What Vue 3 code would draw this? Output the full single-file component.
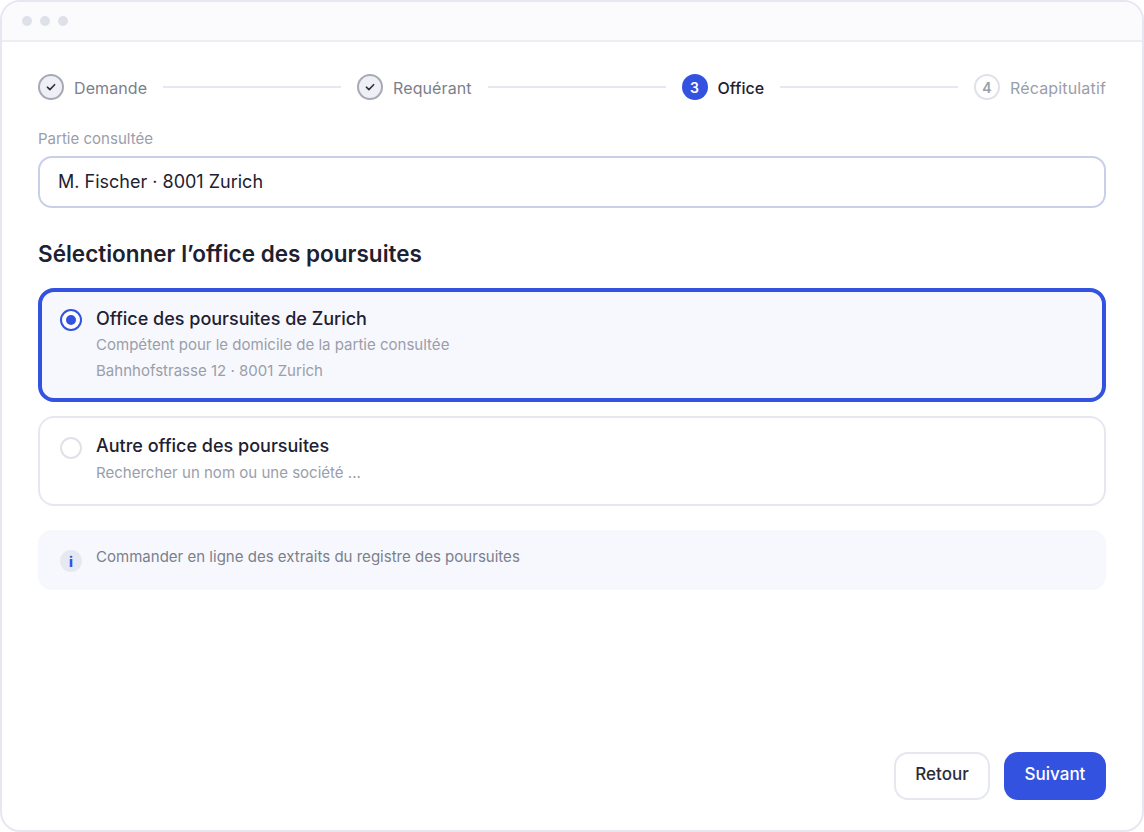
<script setup>
const offices = [
  { id: 'zurich', title: 'Office des poursuites de Zurich', lines: ['Compétent pour le domicile de la partie consultée', 'Bahnhofstrasse 12 · 8001 Zurich'], selected: true },
  { id: 'other', title: 'Autre office des poursuites', lines: ['Rechercher un nom ou une société ...'], selected: false }
]
</script>

<template>
  <div class="window">
    <header class="titlebar">
      <span class="dot"></span><span class="dot"></span><span class="dot"></span>
    </header>
    <main class="content">
      <nav class="stepper">
        <div class="step done">
          <span class="badge"><svg width="10" height="10" viewBox="0 0 10 10"><path d="M1.4 5.2 3.9 7.6 8.6 2.7" fill="none" stroke="#30333f" stroke-width="1.6" stroke-linecap="round" stroke-linejoin="round"/></svg></span>
          <span class="label">Demande</span>
        </div>
        <span class="rule"></span>
        <div class="step done">
          <span class="badge"><svg width="10" height="10" viewBox="0 0 10 10"><path d="M1.4 5.2 3.9 7.6 8.6 2.7" fill="none" stroke="#30333f" stroke-width="1.6" stroke-linecap="round" stroke-linejoin="round"/></svg></span>
          <span class="label">Requérant</span>
        </div>
        <span class="rule"></span>
        <div class="step current">
          <span class="badge">3</span>
          <span class="label">Office</span>
        </div>
        <span class="rule"></span>
        <div class="step todo">
          <span class="badge">4</span>
          <span class="label">Récapitulatif</span>
        </div>
      </nav>

      <label class="field-label">Partie consultée</label>
      <div class="field"><span class="field-value">M. Fischer · 8001 Zurich</span></div>

      <h2 class="heading">Sélectionner l’office des poursuites</h2>

      <div class="options">
        <div v-for="o in offices" :key="o.id" class="option" :class="{ selected: o.selected }">
          <span class="radio"></span>
          <div class="option-body">
            <div class="option-title">{{ o.title }}</div>
            <div v-for="l in o.lines" :key="l" class="option-line">{{ l }}</div>
          </div>
        </div>
      </div>

      <div class="notice">
        <span class="info">i</span>
        <span class="notice-text">Commander en ligne des extraits du registre des poursuites</span>
      </div>

      <footer class="actions">
        <button class="btn secondary">Retour</button>
        <button class="btn primary">Suivant</button>
      </footer>
    </main>
  </div>
</template>

<style>
html, body { margin: 0; background: #fff; }
</style>

<style scoped>
.window {
  box-sizing: border-box;
  width: 1144px;
  height: 832px;
  border: 2px solid #e5e8f0;
  border-radius: 20px;
  overflow: hidden;
  display: flex;
  flex-direction: column;
  background: #fff;
  font-family: Inter, "Liberation Sans", sans-serif;
  color: #1e2130;
}
.titlebar {
  box-sizing: border-box;
  height: 40px;
  flex: none;
  display: flex;
  align-items: center;
  gap: 8px;
  padding-left: 20px;
  background: #fbfbfd;
  border-bottom: 2px solid #eceef4;
}
.dot { width: 10px; height: 10px; border-radius: 50%; background: #dfe1e8; }
.content {
  flex: 1;
  display: flex;
  flex-direction: column;
  padding: 32px 36px 30px;
  min-height: 0;
}
.stepper { display: flex; align-items: center; gap: 16px; height: 26px; }
.step { display: flex; align-items: center; gap: 10px; }
.badge {
  box-sizing: border-box;
  width: 26px;
  height: 26px;
  border-radius: 50%;
  display: flex;
  align-items: center;
  justify-content: center;
  font-size: 14px;
  font-weight: 600;
}
.label { font-size: 16px; line-height: 26px; position: relative; top: 1px; }
.done .badge { background: #eef0f5; border: 2px solid #a6aab5; }
.done .label { color: #7b7f8c; letter-spacing: 0.006em; }
.current .badge { background: #3352e0; color: #fff; }
.current .label { color: #1e2130; font-weight: 500; }
.todo .badge { background: #fff; border: 2px solid #dfe2e9; color: #9a9eaa; }
.todo .label { color: #9a9eaa; letter-spacing: 0.01em; }
.rule { flex: 1; height: 2px; background: #e5e8f0; }

.field-label { margin-top: 28px; font-size: 15.04px; line-height: 22px; color: #9a9eaa; }
.field {
  box-sizing: border-box;
  margin-top: 6px;
  height: 52px;
  border: 2px solid #c8d0e8;
  border-radius: 14px;
  padding: 0 18px 2px;
  display: flex;
  align-items: center;
  font-size: 18px;
  color: #1e2130;
}
.heading { margin: 30px 0 0; font-size: 22.5px; line-height: 32px; font-weight: 600; color: #1e2130; }
.options { margin-top: 18px; display: flex; flex-direction: column; gap: 14px; }
.option {
  box-sizing: border-box;
  border: 2px solid #e5e8f0;
  border-radius: 16px;
  padding: 14px 20px;
  display: flex;
  gap: 14px;
  height: 90px;
}
.option.selected {
  border: 4px solid #3352e0;
  background: #f7f8fd;
  height: 114px;
  padding: 12px 18px;
}
.radio {
  box-sizing: border-box;
  flex: none;
  width: 22px;
  height: 22px;
  margin-top: 5px;
  border-radius: 50%;
  border: 2px solid #dfe2e9;
  background: #fff;
  position: relative;
}
.selected .radio { border-color: #3352e0; }
.selected .radio::after {
  content: "";
  position: absolute;
  inset: 4px;
  border-radius: 50%;
  background: #3352e0;
}
.option-title { font-size: 18px; line-height: 28px; font-weight: 500; color: #1e2130; }
.selected .option-title { position: relative; top: 1px; }
.option-line { font-size: 15.04px; line-height: 26px; color: #9a9eaa; }
.notice {
  margin-top: 24px;
  height: 60px;
  box-sizing: border-box;
  border-radius: 14px;
  background: #f7f8fd;
  padding: 16px 22px;
  display: flex;
  gap: 14px;
}
.info {
  flex: none;
  width: 22px;
  height: 22px;
  margin-top: 4px;
  border-radius: 50%;
  background: #e6e8f2;
  color: #3352e0;
  font-size: 14px;
  font-weight: 800;
  display: flex;
  align-items: center;
  justify-content: center;
}
.notice-text { font-size: 15.04px; line-height: 22px; color: #7b7f8c; }
.actions { margin-top: auto; display: flex; justify-content: flex-end; gap: 14px; }
.btn {
  box-sizing: border-box;
  height: 48px;
  border-radius: 14px;
  padding: 0 0 4px;
  font-family: inherit;
  font-size: 17px;
  font-weight: 500;
}
.secondary { width: 96px; background: #fff; border: 2px solid #e5e8f0; color: #2a2c38; }
.primary { width: 102px; background: #3352e0; border: none; color: #fff; }
</style>
